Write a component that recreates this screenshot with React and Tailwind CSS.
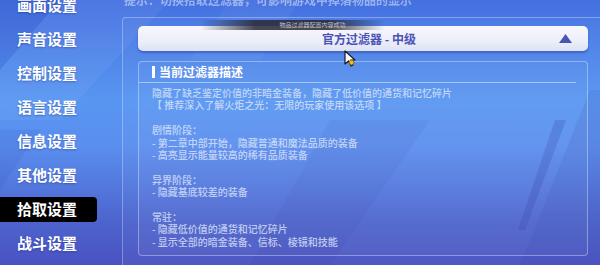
import React from "react";

const menuItems = ["画面设置", "声音设置", "控制设置", "语言设置", "信息设置", "其他设置", "拾取设置", "战斗设置"];

const descLines = [
    "隐藏了缺乏鉴定价值的非暗金装备，隐藏了低价值的通货和记忆碎片",
    "【 推荐深入了解火炬之光：无限的玩家使用该选项 】",
    "",
    "剧情阶段：",
    "- 第二章中部开始，隐藏普通和魔法品质的装备",
    "- 高亮显示能量较高的稀有品质装备",
    "",
    "异界阶段：",
    "- 隐藏基底较差的装备",
    "",
    "常驻：",
    "- 隐藏低价值的通货和记忆碎片",
    "- 显示全部的暗金装备、信标、棱镜和技能",
];

const Backdrop = () => (
    <svg className="absolute inset-0 pointer-events-none" width="600" height="265" viewBox="0 0 600 265">
        <polygon points="60,0 170,0 60,120 0,120 0,70" fill="#ffffff" opacity="0.05" />
        <polygon points="0,0 60,0 0,70" fill="#1e2a8a" opacity="0.1" />
        <polygon points="0,130 40,130 0,190" fill="#1e2a8a" opacity="0.08" />
        <polygon points="330,120 430,120 330,265 250,265" fill="#1e2a8a" opacity="0.06" />
        <polygon points="555,120 566,120 525,230 518,230" fill="#2a3aa0" opacity="0.25" />
        <polygon points="590,90 600,90 600,265 520,265" fill="#2a3aa0" opacity="0.12" />
        <polygon points="230,0 300,0 260,60 190,60" fill="#ffffff" opacity="0.04" />
    </svg>
);

const Cursor = () => (
    <svg className="absolute left-[343px] top-[50px]" width="16" height="18" viewBox="0 0 16 18">
        <path d="M2 1 L2 14 L5.5 11 L8 16 L10 15 L7.6 10.2 L12 10 Z" fill="#ffffff" stroke="#1a1a1a" strokeWidth="1.2" strokeLinejoin="round" />
        <circle cx="8.5" cy="12.5" r="2.4" fill="#f2b81c" stroke="#6b4a00" strokeWidth="0.6" />
    </svg>
);

export default function App() {
    return (
        <div
            className="relative w-[600px] h-[265px] overflow-hidden flex bg-[linear-gradient(180deg,#4470e0_0%,#5896f2_38%,#5a8eef_55%,#4c62cc_85%,#4a52c2_100%)]"
            style={{ fontFamily: '"Noto Sans CJK SC", "Noto Sans", sans-serif' }}
        >
            <Backdrop />

            {/* sidebar */}
            <div className="relative w-[122px] shrink-0 flex flex-col mt-[-12px]">
                {menuItems.map((item) => (
                    <div key={item} className="h-[34px] flex items-center">
                        <div
                            className={
                                item === "拾取设置"
                                    ? "w-[97px] h-[25px] pl-[17px] flex items-center bg-black rounded-r-[4px] text-white text-[15px] font-bold"
                                    : "w-[97px] h-[25px] pl-[17px] flex items-center text-white text-[15px] font-bold [text-shadow:0_1px_2px_rgba(20,30,100,0.35)]"
                            }
                        >
                            {item}
                        </div>
                    </div>
                ))}
            </div>

            {/* main area */}
            <div className="relative flex-1 flex flex-col">
                <div className="h-[17px] overflow-hidden">
                    <div className="mt-[-9px] pl-[2px] text-[12px] font-bold text-white/45 blur-[0.6px] whitespace-nowrap">
                        提示：切换拾取过滤器，可影响游戏中掉落物品的显示
                    </div>
                </div>

                <div className="flex-1 border-t border-l border-white/30 rounded-tl-[4px] pl-[15px] pr-[12px] pt-[8px] bg-white/[0.03]">
                    <div className="h-[25px] rounded-[5px] bg-[linear-gradient(180deg,#f7f7fd_0%,#eceef9_60%,#dfe2f3_100%)] shadow-[0_2px_2px_rgba(30,40,120,0.35)] flex items-center relative">
                        <div className="flex-1 text-center text-[12px] font-bold text-[#4b53b6] pl-[12px]">官方过滤器 - 中级</div>
                        <svg className="absolute right-[16px] top-[8px]" width="13" height="9" viewBox="0 0 13 9">
                            <polygon points="6.5,0 13,9 0,9" fill="#4a55b3" />
                        </svg>
                    </div>

                    <div className="mt-[10px] h-[195px] w-[450px] border border-white/35 rounded-[4px] bg-white/[0.03]">
                        <div className="h-[21px] mr-[11px] border-b border-white/45 flex items-center pl-[13px]">
                            <div className="w-[3px] h-[12px] bg-white mr-[4px]" />
                            <div className="text-[12px] font-bold text-white leading-none">当前过滤器描述</div>
                        </div>
                        <div className="pl-[13px] pt-[4px] text-[10px] font-medium text-[#dfe7fb]/80 leading-[12.4px]">
                            {descLines.map((line, i) => (
                                <div key={i} className="whitespace-nowrap">{line || "\u00a0"}</div>
                            ))}
                        </div>
                    </div>
                </div>

                {/* toast over the dropdown */}
                <div className="absolute left-[78px] top-[20px] w-[185px] h-[10px] bg-[linear-gradient(90deg,rgba(40,40,50,0)_0%,rgba(40,40,50,0.85)_30%,rgba(40,40,50,0.85)_70%,rgba(40,40,50,0)_100%)] flex items-center justify-center">
                    <span className="text-[6px] leading-none text-white/70 pl-[40px]">物品过滤器配置内容成功</span>
                </div>
            </div>

            <Cursor />
        </div>
    );
}
